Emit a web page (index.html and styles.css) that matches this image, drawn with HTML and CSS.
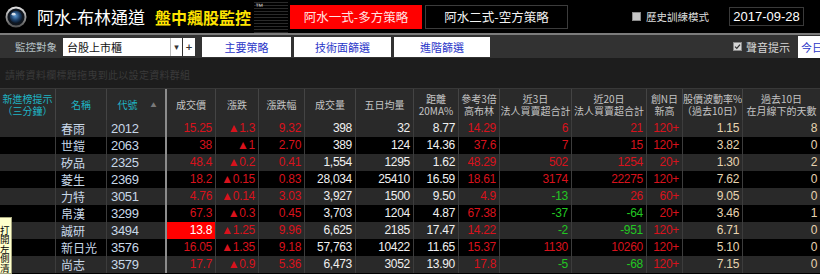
FILE: index.html
```html
<!DOCTYPE html>
<html lang="zh-Hant">

<head>
    <meta charset="UTF-8">
    <meta name="viewport" content="width=device-width, initial-scale=1.0">
    <title>阿水-布林通道 盤中飆股監控</title>
    <link rel="stylesheet" href="styles.css">
</head>

<body>
    <!-- 頂部標題列 -->
    <header class="topbar">
        <div class="brand">
            <svg class="logo" viewBox="0 0 22 22">
                <defs>
                    <linearGradient id="ring" x1="0" y1="0" x2="0" y2="1">
                        <stop offset="0" stop-color="#e6e6e6" />
                        <stop offset="1" stop-color="#505050" />
                    </linearGradient>
                    <radialGradient id="lens" cx="0.45" cy="0.4" r="0.6">
                        <stop offset="0" stop-color="#5b9ad6" />
                        <stop offset="0.6" stop-color="#1d4068" />
                        <stop offset="1" stop-color="#0a1626" />
                    </radialGradient>
                </defs>
                <circle cx="11" cy="11" r="10.5" fill="url(#ring)" />
                <circle cx="11" cy="11" r="8.6" fill="#10161e" />
                <circle cx="11" cy="11" r="6.2" fill="url(#lens)" />
                <ellipse cx="8.6" cy="8.2" rx="2" ry="1.4" fill="#fff" opacity=".8" />
            </svg>
            <span class="title">阿水-布林通道</span>
            <span class="slogan">盤中飆股監控</span>
            <span class="stripes"><span class="tm">™</span></span>
        </div>
        <button class="strategy on">阿水一式-多方策略</button>
        <button class="strategy short">阿水二式-空方策略</button>
        <label class="history"><span class="box"></span>歷史訓練模式</label>
        <div class="date">2017-09-28</div>
    </header>

    <!-- 監控對象 / 策略按鈕 -->
    <div class="toolbar">
        <span class="lbl">監控對象</span>
        <div class="select">
            <span class="val">台股上市櫃</span>
            <span class="arrow">▾</span>
            <span class="plus">+</span>
        </div>
        <button class="tool main">主要策略</button>
        <button class="tool tech">技術面篩選</button>
        <button class="tool adv">進階篩選</button>
        <label class="sound">
            <svg class="chk" viewBox="0 0 9 9">
                <rect x="0.5" y="0.5" width="8" height="8" fill="#d6d6d6" stroke="#8a8a8a" />
                <path d="M2 4.6 L3.8 6.4 L7 2.6" fill="none" stroke="#333" stroke-width="1.3" />
            </svg>
            聲音提示
        </label>
        <button class="today">今日</button>
    </div>

    <!-- 分組區 -->
    <div class="groupbar">請將資料欄標題拖曳到此以設定資料群組</div>

    <!-- 資料表 -->
    <div class="grid">
        <div class="row head">
            <div class="c cy">新進榜提示<br>（三分鐘）</div>
            <div class="c cy">名稱</div>
            <div class="c cy sort">代號<span class="up">▲</span></div>
            <div class="c">成交價</div>
            <div class="c">漲跌</div>
            <div class="c">漲跌幅</div>
            <div class="c">成交量</div>
            <div class="c">五日均量</div>
            <div class="c">距離<br>20MA%</div>
            <div class="c">參考3倍<br>高布林</div>
            <div class="c">近3日<br>法人買賣超合計</div>
            <div class="c">近20日<br>法人買賣超合計</div>
            <div class="c">創N日<br>新高</div>
            <div class="c">股價波動率%<br>（過去10日）</div>
            <div class="c">過去10日<br>在月線下的天數</div>
        </div>

        <div class="row">
            <div class="c"></div><div class="c name">春雨</div><div class="c code">2012</div>
            <div class="c r">15.25</div><div class="c r">▲1.3</div><div class="c r">9.32</div>
            <div class="c w">398</div><div class="c w">32</div><div class="c w">8.77</div><div class="c r">14.29</div>
            <div class="c r">6</div><div class="c r">21</div><div class="c r">120+</div>
            <div class="c t">1.15</div><div class="c t">8</div>
        </div>
        <div class="row">
            <div class="c"></div><div class="c name">世鎧</div><div class="c code">2063</div>
            <div class="c r">38</div><div class="c r">▲1</div><div class="c r">2.70</div>
            <div class="c w">389</div><div class="c w">124</div><div class="c w">14.36</div><div class="c r">37.6</div>
            <div class="c r">7</div><div class="c r">15</div><div class="c r">120+</div>
            <div class="c t">3.82</div><div class="c t">0</div>
        </div>
        <div class="row">
            <div class="c"></div><div class="c name">矽品</div><div class="c code">2325</div>
            <div class="c r">48.4</div><div class="c r">▲0.2</div><div class="c r">0.41</div>
            <div class="c w">1,554</div><div class="c w">1295</div><div class="c w">1.62</div><div class="c r">48.29</div>
            <div class="c r">502</div><div class="c r">1254</div><div class="c r">20+</div>
            <div class="c t">1.30</div><div class="c t">2</div>
        </div>
        <div class="row">
            <div class="c"></div><div class="c name">菱生</div><div class="c code">2369</div>
            <div class="c r">18.2</div><div class="c r">▲0.15</div><div class="c r">0.83</div>
            <div class="c w">28,034</div><div class="c w">25410</div><div class="c w">16.59</div><div class="c r">18.61</div>
            <div class="c r">3174</div><div class="c r">22275</div><div class="c r">120+</div>
            <div class="c t">7.62</div><div class="c t">0</div>
        </div>
        <div class="row">
            <div class="c"></div><div class="c name">力特</div><div class="c code">3051</div>
            <div class="c r">4.76</div><div class="c r">▲0.14</div><div class="c r">3.03</div>
            <div class="c w">3,927</div><div class="c w">1500</div><div class="c w">9.50</div><div class="c r">4.9</div>
            <div class="c g">-13</div><div class="c r">26</div><div class="c r">60+</div>
            <div class="c t">9.05</div><div class="c t">0</div>
        </div>
        <div class="row">
            <div class="c"></div><div class="c name">帛漢</div><div class="c code">3299</div>
            <div class="c r">67.3</div><div class="c r">▲0.3</div><div class="c r">0.45</div>
            <div class="c w">3,703</div><div class="c w">1204</div><div class="c w">4.87</div><div class="c r">67.38</div>
            <div class="c g">-37</div><div class="c g">-64</div><div class="c r">20+</div>
            <div class="c t">3.46</div><div class="c t">1</div>
        </div>
        <div class="row">
            <div class="c"></div><div class="c name">誠研</div><div class="c code">3494</div>
            <div class="c hit">13.8</div><div class="c r">▲1.25</div><div class="c r">9.96</div>
            <div class="c w">6,625</div><div class="c w">2185</div><div class="c w">17.47</div><div class="c r">14.22</div>
            <div class="c g">-2</div><div class="c g">-951</div><div class="c r">120+</div>
            <div class="c t">6.71</div><div class="c t">0</div>
        </div>
        <div class="row">
            <div class="c"></div><div class="c name">新日光</div><div class="c code">3576</div>
            <div class="c r">16.05</div><div class="c r">▲1.35</div><div class="c r">9.18</div>
            <div class="c w">57,763</div><div class="c w">10422</div><div class="c w">11.65</div><div class="c r">15.37</div>
            <div class="c r">1130</div><div class="c r">10260</div><div class="c r">120+</div>
            <div class="c t">5.10</div><div class="c t">0</div>
        </div>
        <div class="row">
            <div class="c"></div><div class="c name">尚志</div><div class="c code">3579</div>
            <div class="c r">17.7</div><div class="c r">▲0.9</div><div class="c r">5.36</div>
            <div class="c w">6,473</div><div class="c w">3052</div><div class="c w">13.90</div><div class="c r">17.8</div>
            <div class="c g">-5</div><div class="c g">-68</div><div class="c r">120+</div>
            <div class="c t">7.15</div><div class="c t">0</div>
        </div>
    </div>

    <!-- 左側清單開關 -->
    <div class="side-tab">打開左側清單</div>
</body>

</html>
```

FILE: styles.css
```css
* {
    margin: 0;
    padding: 0;
    box-sizing: border-box;
}

body {
    width: 820px;
    height: 274px;
    overflow: hidden;
    position: relative;
    background: #000;
    font-family: "Noto Sans CJK TC", "Noto Sans CJK SC", sans-serif;
}

button {
    font-family: inherit;
    cursor: pointer;
}

/* 頂部標題列 */
.topbar {
    height: 35px;
    display: flex;
    align-items: center;
    background: #000;
    border-bottom: 2px solid #7c7c7c;
}

.brand {
    width: 288px;
    height: 33px;
    display: flex;
    align-items: center;
    padding-left: 5px;
}

.logo {
    width: 22px;
    height: 22px;
    flex: none;
}

.title {
    margin-left: 10px;
    color: #fff;
    font-size: 17px;
    line-height: 1;
}

.slogan {
    margin-left: 10px;
    color: #ffe400;
    font-size: 16px;
    font-weight: bold;
    line-height: 1;
}

/* 標題後的橫紋 */
.stripes {
    flex: 1;
    align-self: stretch;
    margin-left: 3px;
    position: relative;
    background: repeating-linear-gradient(#000 0, #000 2px, #2a2a2a 2px, #2a2a2a 3px);
}

.tm {
    position: absolute;
    top: 2px;
    left: 1px;
    font-family: "Liberation Sans", sans-serif;
    font-size: 8px;
    color: #d0d0d0;
}

.strategy {
    width: 132px;
    height: 24px;
    margin-left: 2px;
    border: 1px solid #3c3c3c;
    background: #000;
    color: #f4f4f4;
    font-size: 12.5px;
}

.strategy.on {
    background: #ff0000;
    border-color: #ff0000;
    color: #ffe2e2;
}

.strategy.short {
    width: 143px;
    margin-left: 3px;
}

.history {
    margin-left: 64px;
    display: flex;
    align-items: center;
    gap: 5px;
    color: #dcdcdc;
    font-size: 10.5px;
}

.history .box {
    width: 9px;
    height: 9px;
    background: #c6c6c6;
    border: 1px solid #8a8a8a;
}

.date {
    width: 75px;
    height: 19px;
    margin-left: 20px;
    border: 1px solid #3a3a3a;
    color: #fff;
    font-family: "Liberation Sans", sans-serif;
    font-size: 13px;
    line-height: 17px;
    text-align: center;
}

/* 工具列 */
.toolbar {
    height: 23px;
    display: flex;
    align-items: center;
    padding-left: 15px;
    background: #323232;
    overflow: hidden;
}

.lbl {
    color: #b4c0c4;
    font-size: 10.5px;
    width: 48px;
}

.select {
    display: flex;
    height: 18px;
    font-size: 11px;
    line-height: 18px;
}

.select .val {
    width: 107px;
    background: #fff;
    color: #111;
    padding-left: 4px;
}

.select .arrow,
.select .plus {
    width: 12px;
    background: #fff;
    color: #333;
    text-align: center;
    font-family: "DejaVu Sans", sans-serif;
    font-size: 9px;
}

.select .arrow {
    border-left: 1px solid #bbb;
}

.select .plus {
    margin-left: 1px;
    font-weight: bold;
}

.tool {
    height: 20px;
    border: none;
    background: #fff;
    color: #2a36c8;
    font-size: 11px;
}

.tool.main {
    width: 89px;
    margin-left: 7px;
}

.tool.tech {
    width: 97px;
    margin-left: 3px;
}

.tool.adv {
    width: 96px;
    margin-left: 3px;
}

.sound {
    margin-left: auto;
    display: flex;
    align-items: center;
    gap: 4px;
    color: #d8d8d8;
    font-size: 11px;
}

.chk {
    width: 9px;
    height: 9px;
}

.today {
    width: 40px;
    height: 22px;
    margin-left: 8px;
    margin-right: -18px;
    border: none;
    background: #fff;
    color: #2a36c8;
    font-size: 11px;
    text-align: left;
    padding-left: 3px;
}

/* 分組區 */
.groupbar {
    height: 30px;
    padding: 11px 0 0 5px;
    background: #1d1d1d;
    color: #3a3a3a;
    font-size: 10px;
    letter-spacing: 0.3px;
    line-height: 12px;
}

/* 資料表 */
.row {
    display: grid;
    grid-template-columns: 56px 51px 60px 49px 43px 46px 51px 58px 45px 41px 72px 75px 36px 60px 77px;
    height: 17px;
    background: #292929;
}

.row:nth-child(odd) {
    background: #000;
}

.row .c {
    border-right: 1px solid #3c3c3c;
    padding-right: 3px;
    font-family: "Liberation Sans", sans-serif;
    font-size: 12px;
    letter-spacing: -0.3px;
    line-height: 17px;
    text-align: right;
    white-space: nowrap;
    overflow: hidden;
}

.row .c:nth-child(3) {
    border-right: 2px solid #8c8c8c;
}

.row .c:last-child {
    border-right: none;
}

.row .name {
    text-align: left;
    padding-left: 5px;
    font-family: "Noto Sans CJK TC", sans-serif;
    letter-spacing: 0;
    color: #c8d8e8;
}

.row .code {
    text-align: left;
    padding-left: 4px;
    font-size: 13px;
    color: #c8d8e8;
}

.r {
    color: #d8121c;
}

.g {
    color: #22c622;
}

.w {
    color: #f0f0f0;
}

.t {
    color: #e6d4b0;
}

.row .hit {
    background: #ff0000;
    color: #fff;
}

/* 表頭 */
.row.head {
    height: 32px;
    background: #2a2a2a;
    border-top: 1px solid #383838;
}

.row.head .c {
    display: flex;
    align-items: center;
    justify-content: center;
    padding: 0;
    border-right-color: #444;
    font-family: "Noto Sans CJK TC", sans-serif;
    font-size: 10px;
    letter-spacing: 0;
    line-height: 12px;
    text-align: center;
    color: #c4c4c4;
}

.row.head .c:nth-child(3) {
    border-right-color: #8c8c8c;
}

.row.head .cy {
    color: #1fb4c4;
}

.row.head .sort {
    padding-left: 2px;
}

.up {
    margin-left: 13px;
    font-size: 6px;
    color: #7a7a7a;
}

/* 左側清單開關 */
.side-tab {
    position: absolute;
    left: 0;
    top: 217px;
    width: 12px;
    height: 57px;
    padding-top: 8px;
    background: #ffffcc;
    border: 1px solid #a8a880;
    border-left: none;
    color: #000;
    font-size: 9.5px;
    line-height: 9.4px;
    word-break: break-all;
    overflow: hidden;
}
```
